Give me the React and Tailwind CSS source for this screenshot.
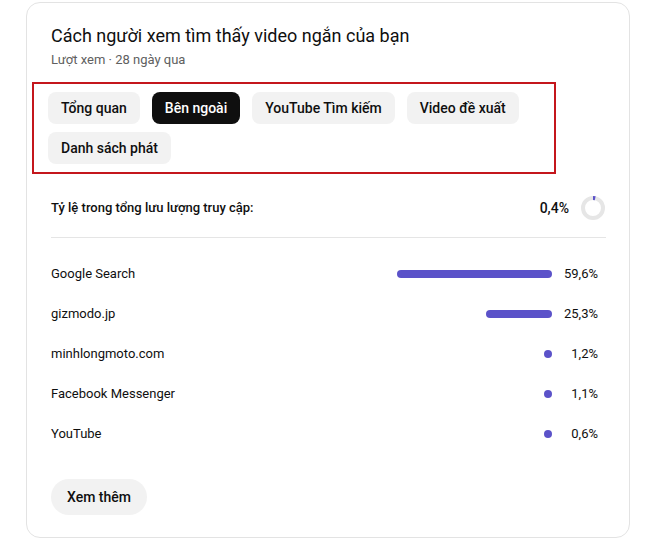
import React from "react";

const tabs = ["Tổng quan", "Bên ngoài", "YouTube Tìm kiếm", "Video đề xuất", "Danh sách phát"];

const sources = [
  { name: "Google Search", value: 59.6 },
  { name: "gizmodo.jp", value: 25.3 },
  { name: "minhlongmoto.com", value: 1.2 },
  { name: "Facebook Messenger", value: 1.1 },
  { name: "YouTube", value: 0.6 },
];

function Donut() {
  // tiny share ring, 0.4% shown as a small wedge at top
  return (
    <svg width="26" height="26" viewBox="0 0 26 26">
      <circle cx="13" cy="13" r="10" fill="none" stroke="#e6e6e6" strokeWidth="4" />
      <path d="M13 3 A10 10 0 0 1 15.2 3.25" fill="none" stroke="#5b52c9" strokeWidth="4" />
    </svg>
  );
}

export default function App() {
  return (
    <div className="bg-white w-[653px] h-[543px] pl-[26px] pt-[2px]" style={{ fontFamily: "Roboto, 'Noto Sans', sans-serif" }}>
      <div className="w-[604px] h-[536px] rounded-[14px] border border-[#e3e3e3] pl-[24px] pr-[23px] pt-[20px] text-[#0f0f0f]">
        <h1 className="text-[18px] leading-[26px] font-normal">Cách người xem tìm thấy video ngắn của bạn</h1>
        <div className="text-[13px] leading-[18px] text-[#606060] mt-[2px]">Lượt xem · 28 ngày qua</div>

        <div className="-ml-[19px] w-[524px] mt-[13px] border-2 border-[#c4161c] pl-[14px] pr-[8px] pt-[8px] pb-[8px] flex flex-wrap gap-x-[12px] gap-y-[8px]">
          {tabs.map((t, i) => (
            <button
              key={t}
              className={
                i === 1
                  ? "h-[32px] px-[13px] rounded-[8px] bg-[#0f0f0f] text-white text-[14px] font-medium"
                  : "h-[32px] px-[13px] rounded-[8px] bg-[#f2f2f2] text-[#0f0f0f] text-[14px] font-medium"
              }
            >
              {t}
            </button>
          ))}
        </div>

        <div className="flex items-center justify-between mt-[20px] h-[28px]">
          <div className="text-[13px] font-medium">Tỷ lệ trong tổng lưu lượng truy cập:</div>
          <div className="flex items-center gap-[11px]">
            <span className="text-[14px] font-medium">0,4%</span>
            <Donut />
          </div>
        </div>

        <div className="border-t border-[#e5e5e5] mt-[15px]"></div>

        <div className="mt-[16px]">
          {sources.map((s) => (
            <div key={s.name} className="flex items-center h-[40px]">
              <div className="flex-1 text-[13px] text-[#0f0f0f]">{s.name}</div>
              <div className="flex justify-end w-[260px]">
                <div
                  className="h-[8px] rounded-full bg-[#5b52c9] min-w-[8px]"
                  style={{ width: `${(s.value / 100) * 260}px` }}
                ></div>
              </div>
              <div className="w-[54px] pr-[8px] text-right text-[13px]">{s.value.toString().replace(".", ",")}%</div>
            </div>
          ))}
        </div>

        <button className="mt-[25px] h-[36px] px-[16px] rounded-full bg-[#f2f2f2] text-[14px] font-medium">Xem thêm</button>
      </div>
    </div>
  );
}
